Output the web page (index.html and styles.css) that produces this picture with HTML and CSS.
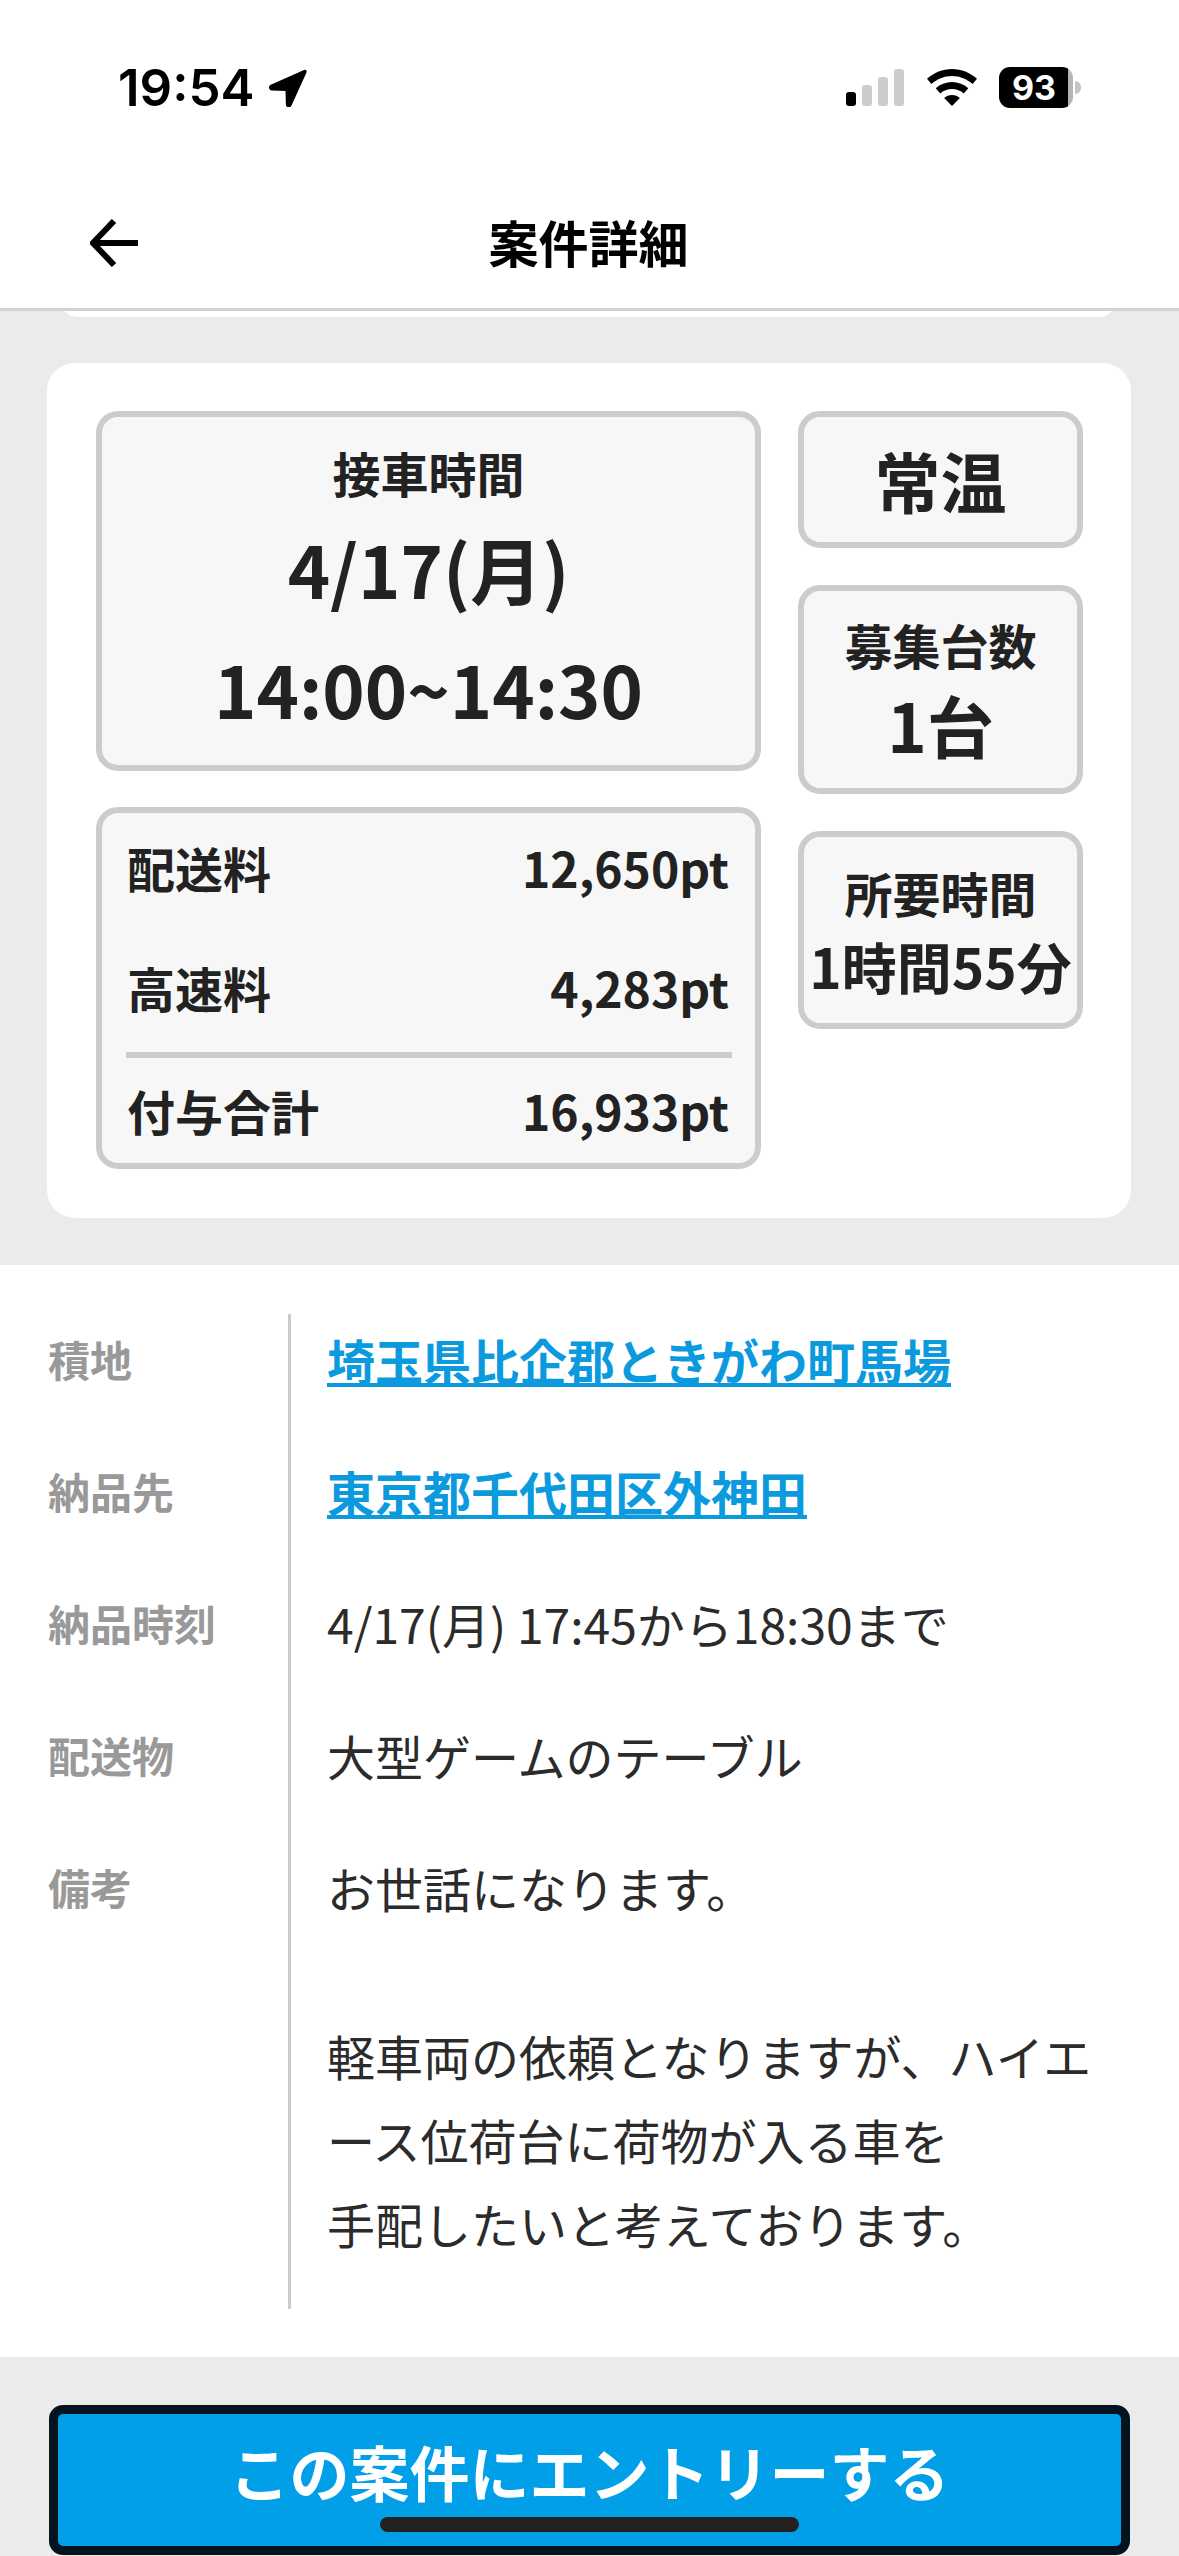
FILE: index.html
```html
<!DOCTYPE html>
<html lang="ja">
<head>
  <meta charset="UTF-8" />
  <meta name="viewport" content="width=device-width, initial-scale=1.0"/>
  <title>案件詳細</title>
  <link rel="stylesheet" href="styles.css">
</head>
<body>
  <div class="page">
    <header class="top">
      <div class="status-bar">
        <div class="status-left">
          <span class="clock">19:54</span>
          <svg class="loc-icon" viewBox="0 0 39 38"><path d="M36 1 2.800 15.800c-3 1.400-2.200 5.600 1.200 5.700l13.500.4.400 13.500c.1 3.300 4.300 4 5.600 1L38.500 3.400c.7-1.700-.8-3.100-2.500-2.400z"/></svg>
        </div>
        <div class="status-right">
          <div class="signal">
            <span class="bar bar-on bar-1"></span>
            <span class="bar bar-2"></span>
            <span class="bar bar-3"></span>
            <span class="bar bar-4"></span>
          </div>
          <svg class="wifi-icon" viewBox="0 0 50 37"><path d="M25 0C15.500 0 7 3.600 0 9.800l4.400 5.200C10.100 10 17.200 7 25 7s14.900 3 20.600 8l4.400-5.200C43 3.600 34.500 0 25 0z"/><path d="M25 13c-6.200 0-11.800 2.300-16.300 6.200l4.500 5.300c3.200-2.700 7.300-4.400 11.800-4.400s8.600 1.700 11.800 4.400l4.500-5.300C36.800 15.300 31.200 13 25 13z"/><path d="M25 26c-3 0-5.700 1-7.900 2.900L25 37l7.900-8.100C30.700 27 28 26 25 26z"/></svg>
          <div class="battery"><span class="battery-num">93</span></div>
          <span class="battery-nub"></span>
        </div>
      </div>
      <div class="nav-bar">
        <svg class="back-icon" viewBox="0 0 50 48"><path d="M48 24H3M24 2 3 24l21 22"/></svg>
        <h1 class="nav-title">案件詳細</h1>
      </div>
    </header>

    <section class="summary-area">
      <div class="peek-card"></div>
      <div class="summary-card">
        <div class="col-main">
          <div class="box pickup-box">
            <div class="label">接車時間</div>
            <div class="big">4/17(月)</div>
            <div class="big">14:00~14:30</div>
          </div>
          <div class="box fee-box">
            <div class="fee-row"><span>配送料</span><span>12,650pt</span></div>
            <div class="fee-row"><span>高速料</span><span>4,283pt</span></div>
            <div class="fee-row fee-total"><span>付与合計</span><span>16,933pt</span></div>
          </div>
        </div>
        <div class="col-side">
          <div class="box temp-box">常温</div>
          <div class="box count-box">
            <div class="label">募集台数</div>
            <div class="count-val">1台</div>
          </div>
          <div class="box time-box">
            <div class="label">所要時間</div>
            <div class="time-val">1時間55分</div>
          </div>
        </div>
      </div>
    </section>

    <section class="details">
      <dl class="detail-list">
        <div class="detail-row"><dt>積地</dt><dd><a href="#">埼玉県比企郡ときがわ町馬場</a></dd></div>
        <div class="detail-row"><dt>納品先</dt><dd><a href="#">東京都千代田区外神田</a></dd></div>
        <div class="detail-row"><dt>納品時刻</dt><dd>4/17(月) 17:45から18:30まで</dd></div>
        <div class="detail-row"><dt>配送物</dt><dd>大型ゲームのテーブル</dd></div>
        <div class="detail-row"><dt>備考</dt><dd class="note">お世話になります。<br><br>軽車両の依頼となりますが、ハイエ<br>ース位荷台に荷物が入る車を<br>手配したいと考えております。</dd></div>
      </dl>
    </section>

    <footer class="bottom">
      <button type="button" class="entry-btn">この案件にエントリーする</button>
      <span class="home-bar"></span>
    </footer>
  </div>
</body>
</html>
```

FILE: styles.css
```css
* {
    margin: 0;
    padding: 0;
    box-sizing: border-box;
}
body {
    font-family: "Noto Sans CJK JP", "Noto Sans", sans-serif;
    background: #ebebeb;
    color: #222;
}
.page {
    width: 1179px;
    height: 2556px;
    overflow: hidden;
    position: relative;
}

/* status + nav */
.top {
    height: 311px;
    background: #fff;
    border-bottom: 3px solid #d2d2d2;
    position: relative;
    z-index: 2;
}
.status-bar {
    height: 176px;
    padding: 67px 98px 0 118px;
    display: flex;
    justify-content: space-between;
    align-items: flex-start;
}
.status-left {
    display: flex;
    align-items: center;
    gap: 13px;
}
.clock {
    font-family: Inter, sans-serif;
    font-size: 51px;
    font-weight: 600;
    line-height: 42px;
    color: #000;
}
.loc-icon {
    width: 39px;
    height: 38px;
    fill: #000;
}
.status-right {
    display: flex;
    align-items: flex-start;
}
.signal {
    display: flex;
    align-items: flex-end;
    gap: 6px;
    height: 37px;
    margin-top: 2px;
    margin-right: 23px;
}
.bar {
    width: 10px;
    background: #ccc;
    border-radius: 3px;
}
.bar-on { background: #000; }
.bar-1 { height: 14px; }
.bar-2 { height: 21px; }
.bar-3 { height: 29px; }
.bar-4 { height: 37px; }
.wifi-icon {
    width: 50px;
    height: 37px;
    margin-top: 2px;
    margin-right: 22px;
    fill: #000;
}
.battery {
    width: 74px;
    height: 41px;
    border-radius: 11px;
    background: linear-gradient(90deg, #000 93%, #b5b5b5 93%);
    display: flex;
    align-items: center;
    padding-left: 13px;
}
.battery-num {
    font-family: Inter, sans-serif;
    font-size: 34px;
    font-weight: 700;
    color: #fff;
    line-height: 1;
}
.battery-nub {
    width: 6px;
    height: 13px;
    margin: 14px 0 0 2px;
    background: #c4c4c4;
    border-radius: 0 7px 7px 0;
}
.nav-bar {
    height: 132px;
    position: relative;
    display: flex;
    align-items: center;
    justify-content: center;
}
.back-icon {
    position: absolute;
    left: 90px;
    top: 43px;
    width: 50px;
    height: 48px;
    fill: none;
    stroke: #000;
    stroke-width: 6;
}
.nav-title {
    font-size: 50px;
    font-weight: 700;
    color: #000;
    line-height: 1.2;
    margin: -3px 0 0 -2px;
}

/* summary card */
.summary-area {
    height: 954px;
    padding: 52px 48px 47px 47px;
    position: relative;
}
.peek-card {
    position: absolute;
    left: 60px;
    right: 62px;
    top: -12px;
    height: 18px;
    background: #fff;
    border-radius: 0 0 18px 18px;
}
.summary-card {
    height: 855px;
    background: #fff;
    border-radius: 28px;
    padding: 48px 48px 0 49px;
    display: grid;
    grid-template-columns: 665px 285px;
    column-gap: 37px;
    align-items: start;
}
.box {
    background: #f7f7f7;
    border: 6px solid #ccc;
    border-radius: 22px;
    text-align: center;
}
.col-main, .col-side {
    display: flex;
    flex-direction: column;
}
.col-main { gap: 36px; }
.col-side { gap: 37px; }
.label {
    font-size: 48px;
    font-weight: 700;
    line-height: 1.2;
}
.pickup-box {
    height: 360px;
    padding-top: 27px;
}
.big {
    font-size: 72px;
    font-weight: 700;
    line-height: 120px;
}
.pickup-box .label { margin-bottom: 6px; }
.fee-box {
    height: 362px;
    padding: 0 23px 0 24px;
}
.fee-row {
    display: flex;
    justify-content: space-between;
    align-items: center;
    height: 120px;
    font-size: 48px;
    font-weight: 700;
    padding: 0 3px 0 1px;
}
.fee-row:first-child { margin-top: -6px; }
.fee-total {
    border-top: 6px solid #ccc;
    height: 110px;
    margin-top: 5px;
}
.temp-box {
    height: 137px;
    font-size: 66px;
    font-weight: 700;
    line-height: 125px;
}
.count-box {
    height: 209px;
    padding-top: 25px;
}
.count-val {
    font-size: 67px;
    font-weight: 700;
    line-height: 100px;
}
.time-box {
    height: 198px;
    padding-top: 27px;
}
.time-val {
    font-size: 55px;
    font-weight: 700;
    line-height: 86px;
    white-space: nowrap;
    margin: 0 -6px;
}

/* details */
.details {
    height: 1092px;
    background: #fff;
    padding: 49px 0 0 48px;
}
.detail-list {
    height: 995px;
    position: relative;
}
.detail-list::before {
    content: "";
    position: absolute;
    left: 240px;
    top: 0;
    bottom: 0;
    width: 3px;
    background: #ccc;
}
.detail-row {
    display: flex;
    align-items: flex-start;
    min-height: 132px;
}
.detail-row dt {
    width: 279px;
    font-size: 42px;
    font-weight: 700;
    color: #999;
    line-height: 90px;
}
.detail-row dd {
    font-size: 48px;
    font-weight: 400;
    line-height: 90px;
    color: #2b2b2b;
    white-space: nowrap;
}
.detail-row a {
    font-weight: 700;
    color: #0b9ade;
    text-decoration: underline;
    text-decoration-thickness: 4px;
    text-underline-offset: 3px;
}
.detail-row .note {
    line-height: 84px;
    margin-top: 3px;
}

/* footer */
.bottom {
    height: 199px;
    padding: 48px 49px 0;
    position: relative;
}
.entry-btn {
    width: 1081px;
    height: 150px;
    font-family: inherit;
    background: #009fe8;
    border: 9px solid #04141f;
    border-radius: 14px;
    color: #fff;
    font-size: 60px;
    font-weight: 700;
    line-height: 1;
    padding-bottom: 18px;
}
.home-bar {
    position: absolute;
    left: 380px;
    top: 160px;
    width: 419px;
    height: 15px;
    background: #222;
    border-radius: 8px;
}
```
